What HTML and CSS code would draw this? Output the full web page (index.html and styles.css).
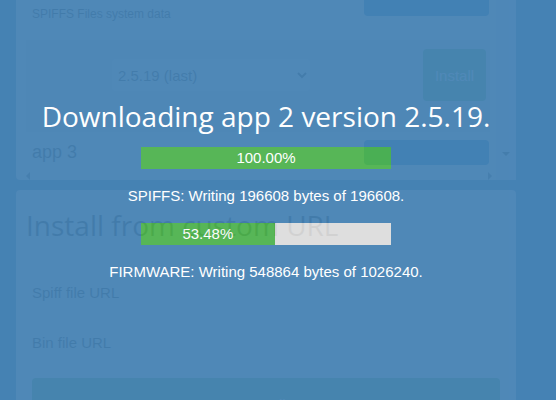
FILE: index.html
```html
<!DOCTYPE html>
<html lang="en">
<head>
<meta charset="utf-8">
<title>Firmware install</title>
<link rel="stylesheet" href="styles.css">
</head>
<body>
<main class="page">
  <section class="card apps">
    <div class="apps-list">
      <div class="app-row first">
        <p class="note">SPIFFS Files system data</p>
        <button class="toggle" type="button" aria-label="Toggle app 2"></button>
      </div>
      <div class="version-panel">
        <select class="version" aria-label="Version"><option>2.5.19 (last)</option></select>
        <button class="install" type="button">Install</button>
      </div>
      <div class="app-row">
        <span class="app-name">app 3</span>
        <button class="toggle" type="button" aria-label="Toggle app 3"></button>
      </div>
      <div class="scroll-x"><i class="arrow left"></i><i class="arrow right"></i></div>
    </div>
    <div class="scroll-y"><i class="arrow down"></i></div>
  </section>
  <section class="card custom">
    <h2>Install from custom URL</h2>
    <form class="fields">
      <label for="spiff">Spiff file URL</label>
      <input id="spiff" type="text">
      <label for="bin">Bin file URL</label>
      <input id="bin" type="text">
      <button class="submit" type="button">Install</button>
    </form>
  </section>
</main>
<div class="overlay" role="dialog" aria-labelledby="status">
  <h1 id="status">Downloading app 2 version 2.5.19.</h1>
  <div class="bar"><div class="fill" style="width:100%"></div><span class="value" style="width:100%">100.00%</span></div>
  <p>SPIFFS: Writing 196608 bytes of 196608.</p>
  <div class="bar"><div class="fill" style="width:53.48%"></div><span class="value" style="width:53.48%">53.48%</span></div>
  <p>FIRMWARE: Writing 548864 bytes of 1026240.</p>
</div>
</body>
</html>
```

FILE: styles.css
```css
* { box-sizing: border-box; }
body {
  margin: 0;
  height: 100vh;
  overflow: hidden;
  background: #4682b4;
  font-family: "Liberation Sans", Arial, sans-serif;
  font-size: 15px;
}
h1, h2, p { margin: 0; font-weight: 400; }
h1, h2 { font-family: "Segoe UI", "Open Sans", sans-serif; }
button, input, select { font: inherit; border: 0; }

.page {
  display: flex;
  flex-direction: column;
  gap: 10px;
  padding: 0 40px 0 16px;
}
.card { background: #f0f0f8; border-radius: 4px; color: #111; }

.apps { display: flex; border-radius: 0 0 4px 4px; }
.apps-list { flex: 1; padding-left: 10px; }
.app-row {
  display: flex;
  justify-content: space-between;
  align-items: center;
  height: 40px;
  padding: 0 7px 0 6px;
}
.app-row.first { align-items: flex-start; }
.note { padding-top: 6px; font-size: 12px; line-height: 16px; }
.app-name { font-size: 18px; }
.toggle {
  width: 125px;
  height: 25px;
  border-radius: 4px;
  background: #0074c0;
}
.first .toggle { height: 16px; border-radius: 0 0 4px 4px; }
.version-panel {
  display: flex;
  justify-content: space-between;
  align-items: center;
  height: 92px;
  margin-right: 6px;
  padding: 0 4px 22px 86px;
  background: #dedee8;
}
.version {
  width: 198px;
  height: 32px;
  padding-left: 2px;
  border-radius: 4px;
  background: #f6f6ff;
  color: #222;
}
.install {
  width: 63px;
  height: 52px;
  padding: 0;
  border-radius: 4px;
  background: #4caf50;
  color: #fff;
}
.scroll-x {
  display: flex;
  justify-content: space-between;
  height: 8px;
  padding-right: 4px;
}
.scroll-y {
  display: flex;
  align-items: flex-end;
  justify-content: center;
  width: 20px;
  padding-bottom: 24px;
  background: #e4e4f0;
}
.arrow { border: 4px solid transparent; }
.down { border-top-color: #333; border-bottom: 0; }
.left { border-right-color: #555; border-left: 0; }
.right { border-left-color: #555; border-right: 0; }

.custom { padding: 13px 16px 16px 10px; }
.custom h2 { font-size: 28px; line-height: 44px; }
.fields {
  display: grid;
  grid-template-columns: 1fr 2fr;
  align-items: center;
  gap: 18px 0;
  padding: 29px 0 0 6px;
}
.fields input { height: 32px; border-radius: 4px; background: #fff; }
.submit {
  grid-column: 1 / -1;
  height: 52px;
  margin-top: 2px;
  border-radius: 4px;
  background: #4caf50;
  color: #fff;
}

.overlay {
  position: fixed;
  inset: 0;
  display: flex;
  flex-direction: column;
  align-items: center;
  gap: 18px;
  padding: 94px 24px 0 0;
  background: #4682b4;
  color: #fff;
  opacity: .95;
}
.overlay h1 { margin-bottom: -9px; font-size: 28px; line-height: 44px; }
.overlay p { line-height: 18px; }
.bar {
  position: relative;
  width: 250px;
  height: 22px;
  background: #ddd;
}
.fill { height: 100%; background: #4eb34e; }
.value {
  position: absolute;
  top: 0;
  left: 0;
  line-height: 22px;
  text-align: center;
}
```
